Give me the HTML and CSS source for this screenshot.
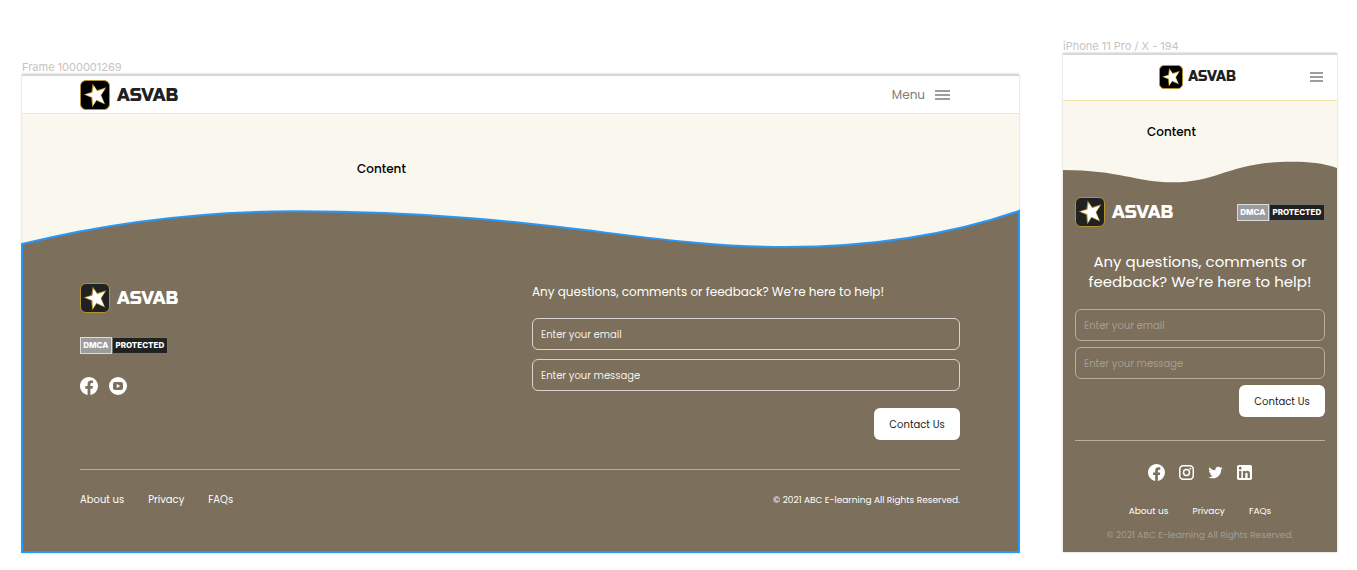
FILE: index.html
```html
<!DOCTYPE html>
<html lang="en">
<head>
<meta charset="utf-8">
<meta name="viewport" content="width=device-width, initial-scale=1">
<title>ASVAB</title>
<link rel="stylesheet" href="styles.css">
</head>
<body>
<svg class="sprite" aria-hidden="true">
  <symbol id="star" viewBox="1 1 28 28">
    <path d="M3.600 14.600 11.400 12 12.600 3.600 17.200 10 26.400 7.200 21.400 15.200 25.200 24.400 16.600 20.800 12.200 27.200 11.200 17.800Z" fill="#b3922f"/>
    <path d="M5.400 14.600 12.400 12.800 13.600 5.800 17.200 11.200 25 8.600 20.600 15.200 24.200 23.400 16.400 19.800 13 25.400 12.400 17.200Z" fill="#fff"/>
  </symbol>
  <symbol id="facebook" viewBox="2 2 20 20"><path d="M12 2.04C6.5 2.04 2 6.53 2 12.06C2 17.06 5.66 21.21 10.44 21.96V14.96H7.9V12.06H10.44V9.85C10.44 7.34 11.93 5.96 14.22 5.96C15.31 5.96 16.45 6.15 16.45 6.15V8.62H15.19C13.95 8.62 13.56 9.39 13.56 10.18V12.06H16.34L15.89 14.96H13.56V21.96A10 10 0 0 0 22 12.06C22 6.53 17.5 2.04 12 2.04Z"/></symbol>
  <symbol id="youtube" viewBox="0 0 18 18"><path fill-rule="evenodd" d="M9 0a9 9 0 1 1 0 18A9 9 0 0 1 9 0ZM6 5Q4 5 4 7v4q0 2 2 2h6q2 0 2-2V7q0-2-2-2ZM7.8 7 11.2 9 7.8 11Z"/></symbol>
  <symbol id="instagram" viewBox="2 2 20 20"><path fill-rule="evenodd" d="M7.5 2h9A5.5 5.5 0 0 1 22 7.5v9a5.5 5.5 0 0 1-5.500 5.500h-9A5.500 5.500 0 0 1 2 16.500v-9A5.500 5.500 0 0 1 7.500 2ZM7.600 4A3.600 3.600 0 0 0 4 7.600v8.800A3.600 3.600 0 0 0 7.600 20h8.800a3.600 3.600 0 0 0 3.600-3.600V7.600A3.600 3.600 0 0 0 16.400 4ZM12 7a5 5 0 1 1 0 10 5 5 0 0 1 0-10Zm0 2a3 3 0 1 0 0 6 3 3 0 0 0 0-6Z"/><circle cx="17.200" cy="6.800" r="1.300"/></symbol>
  <symbol id="twitter" viewBox="1 1.500 22 22"><path d="M22.460 6C21.690 6.350 20.860 6.580 20 6.690C20.880 6.160 21.560 5.320 21.880 4.310C21.050 4.810 20.130 5.160 19.160 5.360C18.370 4.500 17.260 4 16 4C13.650 4 11.730 5.920 11.730 8.290C11.730 8.630 11.770 8.960 11.840 9.270C8.280 9.090 5.110 7.380 3 4.790C2.630 5.420 2.420 6.160 2.420 6.940C2.420 8.430 3.170 9.750 4.330 10.500C3.620 10.500 2.960 10.300 2.380 10V10.030C2.380 12.110 3.860 13.850 5.820 14.240C5.460 14.340 5.080 14.390 4.690 14.390C4.420 14.390 4.150 14.360 3.890 14.310C4.430 16 6 17.260 7.890 17.290C6.430 18.450 4.580 19.130 2.560 19.130C2.220 19.130 1.880 19.110 1.540 19.070C3.440 20.290 5.700 21 8.120 21C16 21 20.330 14.460 20.330 8.790L20.320 8.230C21.160 7.630 21.880 6.870 22.460 6Z"/></symbol>
  <symbol id="linkedin" viewBox="3 3 18 18"><path d="M19 3A2 2 0 0 1 21 5V19A2 2 0 0 1 19 21H5A2 2 0 0 1 3 19V5A2 2 0 0 1 5 3H19M18.500 18.500V13.200A3.260 3.260 0 0 0 15.240 9.940C14.390 9.940 13.400 10.460 12.920 11.240V10.130H10.130V18.500H12.920V13.570C12.920 12.800 13.540 12.170 14.310 12.170A1.400 1.400 0 0 1 15.710 13.570V18.500H18.500M6.880 8.560A1.680 1.680 0 0 0 8.560 6.880C8.560 5.950 7.810 5.190 6.880 5.190A1.690 1.690 0 0 0 5.190 6.880C5.190 7.810 5.950 8.560 6.880 8.560M8.270 18.500V10.130H5.500V18.500H8.270Z"/></symbol>
  <symbol id="bars" viewBox="0 0 15 10" preserveAspectRatio="none"><path d="M0 1H15M0 5H15M0 9H15" fill="none" stroke="currentColor" stroke-width="1.500"/></symbol>
</svg>

<main class="canvas">
  <section class="artboard artboard-desktop">
    <h2 class="artboard-name">Frame 1000001269</h2>
    <div class="frame">
      <header class="topbar">
        <a class="brand brand-dark" href="#"><svg class="brand-mark"><use href="#star"/></svg><span>ASVAB</span></a>
        <button class="menu" type="button">Menu <svg class="bars"><use href="#bars"/></svg></button>
      </header>
      <div class="content"><p>Content</p></div>
      <footer class="footer">
        <svg class="wave" viewBox="0 0 997 38" preserveAspectRatio="none" aria-hidden="true">
          <path class="wave-fill" d="M0 38V34C90 12 180 1.300 273 1.300C515 1.300 620 37 763 37C850 37 930 24 997 1V38Z"/>
          <path class="wave-line" d="M0 38V34C90 12 180 1.300 273 1.300C515 1.300 620 37 763 37C850 37 930 24 997 1V38"/>
        </svg>
        <div class="footer-body">
          <div class="footer-main">
            <div class="footer-brand">
              <a class="brand" href="#"><svg class="brand-mark"><use href="#star"/></svg><span>ASVAB</span></a>
              <a class="dmca" href="#"><span class="dmca-name">DMCA</span><span class="dmca-state">PROTECTED</span></a>
              <nav class="social" aria-label="Social">
                <a href="#" aria-label="Facebook"><svg class="icon-round"><use href="#facebook"/></svg></a>
                <a href="#" aria-label="YouTube"><svg class="icon-round"><use href="#youtube"/></svg></a>
              </nav>
            </div>
            <form class="contact">
              <h3 class="contact-title">Any questions, comments or feedback? We’re here to help!</h3>
              <input class="field" type="email" placeholder="Enter your email" aria-label="Enter your email">
              <input class="field" type="text" placeholder="Enter your message" aria-label="Enter your message">
              <button class="send" type="button">Contact Us</button>
            </form>
          </div>
          <div class="legal">
            <nav class="links"><a href="#">About us</a><a href="#">Privacy</a><a href="#">FAQs</a></nav>
            <small class="copyright">© 2021 ABC E-learning All Rights Reserved.</small>
          </div>
        </div>
      </footer>
    </div>
  </section>

  <section class="artboard artboard-phone">
    <h2 class="artboard-name">iPhone 11 Pro / X - 194</h2>
    <div class="frame">
      <header class="topbar">
        <a class="brand brand-dark" href="#"><svg class="brand-mark"><use href="#star"/></svg><span>ASVAB</span></a>
        <button class="menu" type="button" aria-label="Menu"><svg class="bars"><use href="#bars"/></svg></button>
      </header>
      <div class="content"><p>Content</p></div>
      <footer class="footer">
        <svg class="wave" viewBox="0 0 274 24" preserveAspectRatio="none" aria-hidden="true">
          <path class="wave-fill" d="M0 10C55 10 75 22.300 109 22.300C158 22.300 165 1.700 229 1.700C246 1.700 260 3 274 8V24H0Z"/>
        </svg>
        <div class="footer-body">
          <div class="footer-brand">
            <a class="brand" href="#"><svg class="brand-mark"><use href="#star"/></svg><span>ASVAB</span></a>
            <a class="dmca" href="#"><span class="dmca-name">DMCA</span><span class="dmca-state">PROTECTED</span></a>
          </div>
          <form class="contact">
            <h3 class="contact-title">Any questions, comments or feedback? We’re here to help!</h3>
            <input class="field" type="email" placeholder="Enter your email" aria-label="Enter your email">
            <input class="field" type="text" placeholder="Enter your message" aria-label="Enter your message">
            <button class="send" type="button">Contact Us</button>
          </form>
          <div class="legal">
            <nav class="social" aria-label="Social">
              <a href="#" aria-label="Facebook"><svg class="icon-round"><use href="#facebook"/></svg></a>
              <a href="#" aria-label="Instagram"><svg class="icon"><use href="#instagram"/></svg></a>
              <a href="#" aria-label="Twitter"><svg class="icon"><use href="#twitter"/></svg></a>
              <a href="#" aria-label="LinkedIn"><svg class="icon"><use href="#linkedin"/></svg></a>
            </nav>
            <nav class="links"><a href="#">About us</a><a href="#">Privacy</a><a href="#">FAQs</a></nav>
            <small class="copyright">© 2021 ABC E-learning All Rights Reserved.</small>
          </div>
        </div>
      </footer>
    </div>
  </section>
</main>
</body>
</html>
```

FILE: styles.css
```css
:root {
  --brown: #7c6f5b;
  --cream: #faf7ee;
  --ink: #202122;
  --blue: #2997f6;
}

* { box-sizing: border-box; }

body {
  margin: 0;
  background: #fff;
  color: #000;
  font-family: Poppins, Inter, "Liberation Sans", sans-serif;
  font-size: 10px;
}

h2, h3, p { margin: 0; font-weight: inherit; }
a { color: inherit; text-decoration: none; }
svg { display: block; flex: none; fill: currentColor; }
button, input { font: inherit; }
button { cursor: pointer; }

.sprite { position: absolute; width: 0; height: 0; }

/* Canvas and artboards */
.canvas {
  display: flex;
  align-items: flex-end;
  gap: 44px;
  padding: 39px 20px 17px 22px;
}
.artboard { min-width: 0; }
.artboard-desktop { flex: 997 1 0; }
.artboard-phone { flex: 274 1 0; }
.artboard-name {
  font-family: Inter, sans-serif;
  font-size: 11px;
  line-height: 14px;
  color: #c4c4c4;
  white-space: nowrap;
}
.frame {
  border-top: 2px solid #d8d8d8;
  background: #fff;
  box-shadow: 0 0 2px rgba(0, 0, 0, 0.25);
}

/* Brand */
.brand {
  display: flex;
  align-items: center;
  gap: 7px;
  color: #fff;
  font-family: "Russo One", Inter, sans-serif;
  font-weight: 400;
  font-size: 18px;
  line-height: 20px;
}
.brand-mark {
  width: 30px;
  height: 30px;
  border: 1px solid #b3922f;
  border-radius: 6px;
  background: var(--ink);
}
.brand-dark { color: var(--ink); }
.brand-dark .brand-mark { background: #000; }

/* Top bar */
.topbar {
  display: flex;
  align-items: center;
  justify-content: space-between;
  border-bottom: 1px solid #e6e6e4;
}
.menu {
  display: flex;
  align-items: center;
  gap: 10px;
  padding: 0;
  border: 0;
  background: none;
  color: #7d7d7d;
  font-size: 12px;
}
.bars { width: 15px; height: 10px; }

.content {
  background: var(--cream);
  font-size: 12px;
  font-weight: 500;
  line-height: 18px;
}

/* Footer */
.footer { background: var(--cream); }
.wave { width: 100%; overflow: visible; }
.wave-fill { fill: var(--brown); }
.wave-line {
  fill: none;
  stroke: var(--blue);
  stroke-width: 2;
  vector-effect: non-scaling-stroke;
}
.footer-body { background: var(--brown); color: #fff; }

.dmca {
  display: flex;
  width: 88px;
  height: 17px;
  font-family: Inter, sans-serif;
  font-size: 8px;
  font-weight: 800;
  line-height: 15px;
  text-align: center;
}
.dmca-name { flex: 31 1 0; border: 1px solid #dcdcdc; background: #9b9c9e; }
.dmca-state { flex: 57 1 0; border: 1px solid #77736d; background: var(--ink); }

.social { display: flex; align-items: center; }
.icon-round { width: 18px; height: 18px; }
.icon { width: 15px; height: 15px; }

.contact { display: flex; flex-direction: column; }
.contact-title { font-weight: 400; }
.field {
  width: 100%;
  height: 32px;
  padding: 1px 8px 0;
  border: 1px solid #d9d5ce;
  border-radius: 6px;
  background: transparent;
  color: #fff;
}
.field::placeholder { color: #f1efec; opacity: 1; }
.send {
  align-self: flex-end;
  width: 86px;
  height: 32px;
  padding: 1px 0 0;
  border: 0;
  border-radius: 6px;
  background: #fff;
  color: var(--ink);
}
.legal { border-top: 1px solid #b5aea3; }
.links { display: flex; gap: 24px; }

/* Desktop artboard */
.artboard-desktop .topbar { padding: 4px 69px 3px 58px; }
.artboard-desktop .content { padding: 46px 33% 32px 335px; }
.artboard-desktop .wave { height: 38px; }
.artboard-desktop .footer-body {
  margin: 0 -1px -1px;
  padding: 35px 58px 43px 57px;
  border: 2px solid var(--blue);
  border-top: 0;
}
.artboard-desktop .footer-main {
  display: grid;
  grid-template-columns: 452fr 428fr;
}
.artboard-desktop .dmca { margin: 24px 0 23px; }
.artboard-desktop .social { gap: 11px; }
.artboard-desktop .contact-title {
  margin-bottom: 17px;
  font-size: 12px;
  line-height: 18px;
}
.artboard-desktop .field + .field { margin-top: 9px; }
.artboard-desktop .send { margin-top: 17px; }
.artboard-desktop .legal {
  display: flex;
  align-items: center;
  justify-content: space-between;
  margin-top: 29px;
  padding-top: 22px;
  line-height: 16px;
}
.artboard-desktop .copyright { font-size: 9px; }

/* Phone artboard */
.artboard-phone .topbar {
  display: grid;
  grid-template-columns: 1fr auto 1fr;
  padding: 10px 14px 11px 9px;
  border-bottom-color: #f3e6a8;
}
.artboard-phone .topbar .brand { grid-column: 2; gap: 5px; font-size: 14px; }
.artboard-phone .topbar .brand-mark { width: 24px; height: 24px; border-radius: 5px; }
.artboard-phone .menu { justify-self: end; }
.artboard-phone .bars { width: 13px; }
.artboard-phone .content { padding: 22px 24px 19px 84px; }
.artboard-phone .wave { height: 24px; }
.artboard-phone .footer-body { padding: 13px 12px 9px; }
.artboard-phone .footer-brand {
  display: flex;
  align-items: center;
  justify-content: space-between;
}
.artboard-phone .contact-title {
  margin: 25px 0 17px;
  font-size: 15px;
  line-height: 20px;
  text-align: center;
}
.artboard-phone .field { border-color: #b5aea3; }
.artboard-phone .field::placeholder { color: #a59e93; }
.artboard-phone .field + .field,
.artboard-phone .send { margin-top: 6px; }
.artboard-phone .legal {
  display: flex;
  flex-direction: column;
  align-items: center;
  margin-top: 23px;
  padding-top: 23px;
  font-size: 9px;
  line-height: 16px;
}
.artboard-phone .social { gap: 14px; }
.artboard-phone .social .icon-round { width: 17px; height: 17px; }
.artboard-phone .links { margin: 22px 0 8px; }
.artboard-phone .copyright { font-size: 9px; color: #a59e93; }
```
